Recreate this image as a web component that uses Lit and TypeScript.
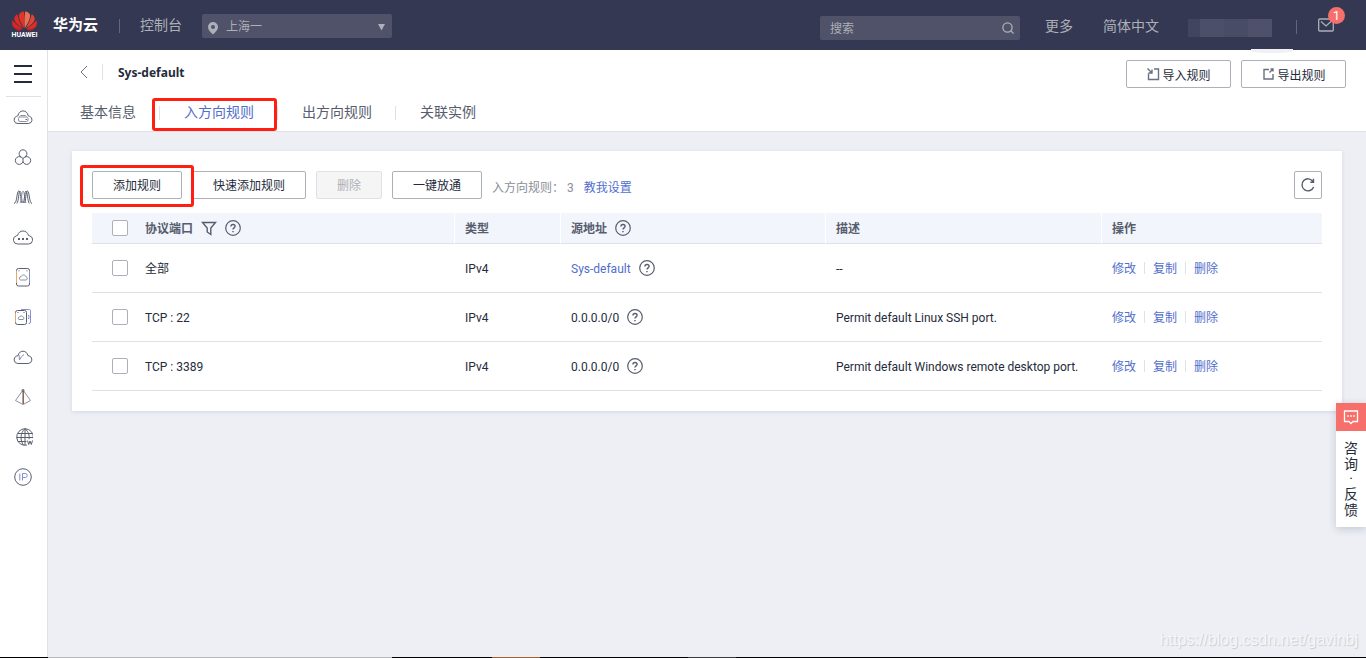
import { LitElement, html, css, svg, nothing } from "lit";
import { customElement, property } from "lit/decorators.js";
import { classMap } from "lit/directives/class-map.js";

interface Rule {
  protocol: string;
  type: string;
  source: string;
  group: boolean;
  note: string;
}

const rules: Rule[] = [
  { protocol: "全部", type: "IPv4", source: "Sys-default", group: true, note: "--" },
  { protocol: "TCP : 22", type: "IPv4", source: "0.0.0.0/0", group: false, note: "Permit default Linux SSH port." },
  { protocol: "TCP : 3389", type: "IPv4", source: "0.0.0.0/0", group: false, note: "Permit default Windows remote desktop port." },
];

const tabs = ["基本信息", "入方向规则", "出方向规则", "关联实例"];

const services = [
  {
    name: "云服务器",
    art: svg`<path d="M5 16.500h10.500a3.700 3.700 0 0 0 1-7.200l-1.300-.4C14.800 6 12.800 3.900 10 3.900S5.300 6 4.900 8.900l-1.300.4A3.700 3.700 0 0 0 5 16.500z"/><rect x="5.500" y="10" width="9.500" height="4.500" rx="1.500" class="soft"/><path class="soft" d="M6.500 9.500l1-1h5l1 1"/><path d="M12.500 12.500h1.500"/>`,
  },
  {
    name: "弹性伸缩",
    art: svg`<path d="M8.300 10.200a3.900 3.900 0 1 1 3.400 0M10 14.500a3.900 3.900 0 1 1-1.700-4.300L10 11.500l1.700-1.300A3.900 3.900 0 1 1 10 14.500v-3"/>`,
  },
  {
    name: "负载均衡",
    art: svg`<path d="M1 16.500C4.500 16 3.500 4 5.800 4S7.500 15 9 16M3.800 16.500C6 14 5.500 4 7 4"/><path class="soft" d="M7 4c1.500 0 1.500 10 3 12M7 16c1.800-2 1.500-12 3-12s1.500 10 3 12"/><path d="M10 16c1.800-2 1.500-12 3-12s1.500 10 3.200 12.500M11.500 16c1.500-2 1-12 3-12s1.500 12 4.500 12.500"/>`,
  },
  {
    name: "云容器",
    art: svg`<path d="M4.500 17h11a4.200 4.200 0 0 0 1.200-8.200l-1.200-.3C14.700 5.500 12.500 4 10 4S5.300 5.500 4.500 8.500l-1.200.3A4.200 4.200 0 0 0 4.500 17z"/><path class="dots" d="M5 12h2M9 12h2M13 12h2"/>`,
  },
  {
    name: "云硬盘",
    art: svg`<rect x="3.500" y="1.500" width="13" height="17.500" rx="2"/><path class="hot" d="M3.500 4v12"/><path class="cool" d="M16.500 4v12"/><path class="soft" d="M7.500 13h5.500a1.700 1.700 0 0 0 0-3.300c-.6-2.200-4.400-2.200-5 0a1.700 1.700 0 0 0-.5 3.300z"/><path d="M5.500 3.800h1M13.500 3.800h1"/>`,
  },
  {
    name: "云备份",
    art: svg`<rect x="2.500" y="3.500" width="11" height="14" rx="2"/><path class="hot" d="M2.500 6v9"/><path class="cool" d="M8 2.500h8.500a1 1 0 0 1 1 1v11.500a1.500 1.500 0 0 1-1.500 1.500h-.5M15 8.500h1v3h-1"/><path class="soft" d="M6 12.500h4a1.300 1.300 0 0 0 0-2.500c-.5-1.500-3-1.500-3.500 0a1.300 1.300 0 0 0-.5 2.500z"/><path d="M4.500 5.500h1M10.500 5.500h1"/>`,
  },
  {
    name: "对象存储",
    art: svg`<path d="M4.800 16.500h10.400a3.900 3.900 0 0 0 1-7.600l-1.200-.2C14.200 5.800 12.500 4.200 10 4.200S5.600 5.800 5 8.700l-1.200.2a3.900 3.900 0 0 0 1 7.600z"/><path class="cool" d="M6 8l.5 5 2-3.500 2.500-2"/>`,
  },
  {
    name: "虚拟私有云",
    art: svg`<path class="soft" d="M10 3L2.500 13.500 10 17.500l7.500-4z"/><path class="hot" d="M9.500 4v13"/><path d="M10.400 4v13"/><circle cx="10" cy="3.500" r="1"/>`,
  },
  {
    name: "广域网络",
    art: svg`<g transform="translate(2 0)"><path d="M12 18.100A8.300 8.300 0 1 1 18.200 11.500"/><path d="M8.500 18C5 13.500 5 6 10 1.700v16.300M10 1.700c4 3.500 4.500 7 4 10.500M3 6.500h14M1.700 10.500h16.500M3 14.500h8.500M12.500 13.500l1.200 4 1.300-3.500 1.300 3.500 1.200-4"/></g>`,
  },
  {
    name: "弹性公网",
    art: svg`<circle cx="10" cy="10" r="8.300"/><path class="cool" d="M6.800 6.500v7M9.500 13.500v-7h2.700a2 2 0 0 1 0 4H9.500"/>`,
  },
];

const helpIcon = html`<svg class="help" viewBox="0 0 16 16" aria-hidden="true">
  <circle cx="8" cy="8" r="7.300" />
  <path class="mark" d="M5.900 6.500A2.100 2.100 0 0 1 8 4.500c1.200 0 2.100.8 2.100 1.800 0 1.500-2.100 1.600-2.100 3.200M8 11v1.300" />
</svg>`;

const base = css`
  * { box-sizing: border-box; }
  a { color: inherit; text-decoration: none; }
  button, input, select { font: inherit; margin: 0; }
  svg { display: block; flex: none; fill: none; }
`;

@customElement("console-header")
class ConsoleHeader extends LitElement {
  static styles = [base, css`
    :host { display: flex; align-items: center; height: 50px; padding: 0 32px 0 12px; background: #343853; color: #adb0b8; font-size: 14px; line-height: 20px; position: relative; }
    .logo { width: 25px; }
    .flower { width: 25px; height: 20px; }
    .word { display: flex; justify-content: center; font: 700 7px/8px Roboto, sans-serif; color: #fff; }
    .brand { margin-left: 16px; font-size: 15px; font-weight: 700; color: #fff; }
    .rule { width: 1px; height: 14px; background: #62667b; margin: 2px 20px 0 21px; }
    .region { position: relative; margin: 2px 0 0 20px; width: 190px; height: 24px; }
    .region select { appearance: none; width: 100%; height: 24px; border: 0; border-radius: 2px; background: #4f5269; color: #adb0b8; font-size: 12px; padding: 2px 24px 0; }
    .pin { position: absolute; left: 5px; top: 7px; width: 12px; height: 14px; fill: #adb0b8; pointer-events: none; }
    .arrow { position: absolute; right: 6px; top: 9px; width: 9px; height: 8px; fill: #adb0b8; pointer-events: none; }
    .search { display: flex; align-items: center; margin: 6px 25px 0 auto; width: 200px; height: 24px; border-radius: 2px; background: #4f5269; padding: 0 5px 0 10px; }
    .search input { flex: 1; min-width: 0; border: 0; padding: 2px 0 0; background: none; color: #adb0b8; font-size: 12px; }
    .search input::placeholder { color: #adb0b8; opacity: 1; }
    .search svg { width: 14px; height: 14px; stroke: #adb0b8; stroke-width: 1.300; }
    .more, .lang { padding-top: 2px; }
    .lang { margin: 0 29px 0 30px; }
    .user { width: 84px; height: 18px; margin-top: 5px; background: linear-gradient(90deg, #41455f 0 12px, #4b4f67 12px 36px, #494c65 36px 60px, #4e5169 60px); }
    .last { margin: 3px 21px 0 24px; }
    .mail { position: relative; width: 16px; }
    .mail svg { width: 16px; height: 14px; stroke: #adb0b8; stroke-width: 1.300; }
    .badge { position: absolute; left: 10px; top: -11px; width: 17px; height: 17px; border-radius: 50%; background: #f66f6a; color: #fff; text-align: center; font-size: 13px; line-height: 17px; }
    .smudge { position: absolute; right: 73px; bottom: -3px; width: 42px; height: 4px; border-radius: 0 0 50% 50%; background: #f1f1f5; z-index: 1; }
  `];

  render() {
    return html`
      <a class="logo" href="#" aria-label="HUAWEI">
        <svg class="flower" viewBox="0 0 26 20">
          <path fill="#e2352a" d="M12.700 17.500C9.300 12 6.600 7 7.300 3.500 7.800 1.600 10 .3 12.300.1c.7 5.500.8 11.500.4 17.400z" />
          <path fill="#ee6f52" d="M13.300 17.500C16.700 12 19.400 7 18.700 3.500 18.200 1.600 16 .3 13.700.1c-.7 5.500-.8 11.500-.4 17.400z" />
          <path fill="#e02a24" d="M11.900 17.800C6.500 14.700 2.600 11.500 2.400 8c-.1-2.200 1.200-4 3.200-5 .9 5.500 3.500 10.500 6.300 14.800z" />
          <path fill="#e4432f" d="M14.100 17.800C19.500 14.700 23.400 11.500 23.600 8c.1-2.200-1.200-4-3.200-5-.9 5.500-3.500 10.500-6.300 14.800z" />
          <path fill="#dc2420" d="M11.200 18.400C6 18.700 2.500 18.200 1 15.700-.2 13.700-.1 11.200.6 9.300c2.800 3.700 6.600 6.600 10.600 9.100z" />
          <path fill="#df2c26" d="M14.800 18.400c5.200.3 8.700-.2 10.200-2.700 1.200-2 1.100-4.500.4-6.400-2.800 3.700-6.600 6.600-10.600 9.100z" />
          <path fill="#d2201e" d="M11 18.800c-3 1.800-6 1.700-8.100-.1zM15 18.800c3 1.800 6 1.700 8.100-.1z" />
        </svg>
        <span class="word">HUAWEI</span>
      </a>
      <span class="brand">华为云</span>
      <span class="rule"></span>
      <a href="#">控制台</a>
      <div class="region">
        <select aria-label="区域"><option>上海一</option></select>
        <svg class="pin" viewBox="0 0 12 14"><path fill-rule="evenodd" d="M6 1a5 5 0 0 0-5 5c0 3.500 5 7.500 5 7.500S11 9.500 11 6a5 5 0 0 0-5-5zm0 3a2 2 0 1 1 0 4 2 2 0 0 1 0-4z" /></svg>
        <svg class="arrow" viewBox="0 0 9 8"><path d="M1 1h7L4.500 7.500z" /></svg>
      </div>
      <label class="search">
        <input type="text" placeholder="搜索" aria-label="搜索" />
        <svg viewBox="0 0 14 14"><circle cx="6.500" cy="6.500" r="4.600" /><path d="M9.500 9.500l3 3" /></svg>
      </label>
      <a class="more" href="#">更多</a>
      <a class="lang" href="#">简体中文</a>
      <span class="user"></span>
      <span class="rule last"></span>
      <a class="mail" href="#" aria-label="消息">
        <svg viewBox="0 0 16 14"><rect x=".7" y="1" width="14.600" height="12" rx="1" /><path d="M3 3.500l5 4.500 5-4.500" /></svg>
        <span class="badge">1</span>
      </a>
      <span class="smudge"></span>
    `;
  }
}

@customElement("side-nav")
class SideNav extends LitElement {
  static styles = [base, css`
    :host { display: block; flex: none; width: 48px; background: #fff; border-right: 1px solid #dfe1e6; }
    .toggle { display: flex; align-items: center; justify-content: center; width: 100%; height: 46px; padding: 2px 1px 0 0; border: 0; background: none; }
    .toggle svg { width: 18px; height: 18px; stroke: #252b3a; stroke-width: 2; }
    nav { margin: 0 6px; border-top: 1px solid #dfe1e6; }
    .item { display: flex; align-items: center; justify-content: center; height: 40px; padding-right: 1px; }
    .item svg { width: 20px; height: 20px; stroke: #5a5f70; stroke-width: 1; }
    .soft { stroke: #8b90a0; }
    .dots { stroke-width: 2; }
    .hot { stroke: #e8a56c; }
    .cool { stroke: #848fcd; }
  `];

  render() {
    return html`
      <button class="toggle" aria-label="菜单"><svg viewBox="0 0 18 18"><path d="M0 1h18M0 9h18M0 17h18" /></svg></button>
      <nav>
        ${services.map((s) => html`<a class="item" href="#" aria-label=${s.name}><svg viewBox="0 0 20 20">${s.art}</svg></a>`)}
      </nav>
    `;
  }
}

@customElement("group-heading")
class GroupHeading extends LitElement {
  static styles = [base, css`
    :host { display: flex; justify-content: space-between; align-items: flex-start; padding: 10px 20px 0 32px; background: #fff; border-bottom: 1px solid #dfe1e6; }
    .title { display: flex; align-items: center; height: 24px; }
    .back { width: 8px; height: 14px; stroke: #6a7080; }
    .bar { width: 1px; height: 16px; margin: 0 15px 0 14px; background: #dfe1e6; }
    h1 { margin: 0; padding-top: 2px; font: 700 12px/22px "Noto Sans", "Noto Sans CJK SC", sans-serif; color: #252b3a; }
    .tabs { display: flex; align-items: center; height: 47px; padding-top: 9px; }
    .tab { position: relative; padding: 0 23px 0 24px; font-size: 14px; line-height: 20px; color: #575d6c; }
    .tab:first-child { padding-left: 0; }
    .tab + .tab { padding-left: 25px; }
    .tab + .tab::before { content: ""; position: absolute; left: 0; top: 4px; width: 1px; height: 14px; background: #dfe1e6; }
    .tab.active { color: #526ecc; }
    .frame { position: absolute; left: -7px; right: 0; top: -4px; height: 33px; border: 3px solid #ff1f12; border-radius: 3px; }
    .actions { display: flex; gap: 10px; }
    .actions button { display: flex; align-items: center; justify-content: center; gap: 2px; width: 105px; height: 28px; padding: 0; border: 1px solid #adb0b8; border-radius: 2px; background: #fff; color: #252b3a; font-size: 12px; }
    .actions svg { width: 14px; height: 14px; stroke: #6a7080; stroke-width: 1.400; }
  `];

  render() {
    return html`
      <div>
        <div class="title">
          <a href="#" aria-label="返回"><svg class="back" viewBox="0 0 8 14"><path d="M7 1L1 7l6 6" /></svg></a>
          <span class="bar"></span>
          <h1>Sys-default</h1>
        </div>
        <nav class="tabs">
          ${tabs.map((t, i) => html`<a href="#" class=${classMap({ tab: true, active: i === 1 })}>${t}${i === 1 ? html`<span class="frame"></span>` : nothing}</a>`)}
        </nav>
      </div>
      <div class="actions">
        <button><svg viewBox="0 0 14 14"><path d="M2.500 6.500v6h10V2H8M1.500 1.500l4.500 4.500M6 2.500v3.500H2.500" /></svg>导入规则</button>
        <button><svg viewBox="0 0 14 14"><path d="M8 2.500H3v9.500h9V7M8.500 5.500L11.500 2.500M9.500 2H12v2.500" /></svg>导出规则</button>
      </div>
    `;
  }
}

@customElement("rule-table")
class RuleTable extends LitElement {
  @property({ attribute: false }) rows: Rule[] = [];

  static styles = [base, css`
    :host { display: block; }
    table { width: 100%; table-layout: fixed; border-collapse: separate; border-spacing: 0; font-size: 12px; line-height: 18px; color: #252b3a; }
    .c-check { width: 43px; }
    .c-port { width: 320px; }
    .c-type { width: 106px; }
    .c-source { width: 265px; }
    .c-action { width: 220px; }
    th, td { padding: 2px 10px 0; text-align: left; border-bottom: 1px solid #dfe1e6; }
    th { height: 31px; background: #f2f5fc; color: #575d6c; font-weight: 700; }
    .split { border-right: 1px solid #fff; }
    td { height: 49px; }
    th:first-child, td:first-child { padding: 0 0 0 20px; }
    .cell { display: flex; align-items: center; gap: 8px; }
    input { appearance: none; display: block; width: 16px; height: 16px; border: 1px solid #adb0b8; border-radius: 2px; background: #fff; }
    .cell svg { width: 16px; height: 16px; margin-bottom: 2px; stroke: #575d6c; stroke-width: 1.200; }
    .mark { stroke-width: 1.400; }
    .link { color: #526ecc; }
    .ops { display: flex; align-items: center; }
    .ops a + a { margin-left: 8px; padding-left: 9px; position: relative; }
    .ops a + a::before { content: ""; position: absolute; left: 0; top: 2px; width: 1px; height: 12px; background: #dfe1e6; }
  `];

  render() {
    return html`
      <table>
        <colgroup><col class="c-check" /><col class="c-port" /><col class="c-type" /><col class="c-source" /><col /><col class="c-action" /></colgroup>
        <thead>
          <tr>
            <th><input type="checkbox" aria-label="全选" /></th>
            <th class="split"><div class="cell">协议端口
              <svg viewBox="0 0 16 16"><path class="mark" d="M1.500 2.500h13L9.800 8v6.500L6.200 12V8z" /></svg>${helpIcon}</div></th>
            <th class="split">类型</th>
            <th class="split"><div class="cell">源地址${helpIcon}</div></th>
            <th class="split">描述</th>
            <th>操作</th>
          </tr>
        </thead>
        <tbody>
          ${this.rows.map((r) => html`<tr>
            <td><input type="checkbox" aria-label=${r.protocol} /></td>
            <td>${r.protocol}</td>
            <td>${r.type}</td>
            <td><div class="cell">${r.group ? html`<a class="link" href="#">${r.source}</a>` : html`<span>${r.source}</span>`}${helpIcon}</div></td>
            <td>${r.note}</td>
            <td><div class="ops link"><a href="#">修改</a><a href="#">复制</a><a href="#">删除</a></div></td>
          </tr>`)}
        </tbody>
      </table>
    `;
  }
}

@customElement("rule-card")
class RuleCard extends LitElement {
  static styles = [base, css`
    :host { display: block; margin: 19px 24px 0; padding: 20px; background: #fff; box-shadow: 0 1px 4px rgba(37, 43, 58, 0.12); }
    .toolbar { display: flex; align-items: center; gap: 10px; margin-bottom: 14px; font-size: 12px; line-height: 18px; }
    button { position: relative; height: 28px; padding: 2px 20px 0; border: 1px solid #adb0b8; border-radius: 2px; background: #fff; color: #252b3a; white-space: nowrap; }
    button:disabled { background: #f5f5f6; border-color: #dfe1e6; color: #adb0b8; }
    .add { z-index: 1; }
    .frame { position: absolute; inset: -7px -13px -9px; border: 3px solid #ff1f12; border-radius: 3px; }
    .summary { display: flex; margin: 6px auto 0 0; color: #8a8e99; }
    .summary b { margin: 0 10px 0 3px; font-weight: 400; }
    .summary a { color: #526ecc; }
    .refresh { display: grid; place-items: center; width: 28px; padding: 0; }
    .refresh svg { width: 16px; height: 16px; stroke: #575d6c; stroke-width: 1.400; }
  `];

  render() {
    return html`
      <div class="toolbar">
        <button class="add">添加规则<span class="frame"></span></button>
        <button>快速添加规则</button>
        <button disabled>删除</button>
        <button>一键放通</button>
        <div class="summary"><span>入方向规则：</span><b>3</b><a href="#">教我设置</a></div>
        <button class="refresh" aria-label="刷新"><svg viewBox="0 0 16 16"><path d="M13.600 10A6 6 0 1 1 13 4.500M13.500 1.800v3.400h-3.200" /></svg></button>
      </div>
      <rule-table .rows=${rules}></rule-table>
    `;
  }
}

@customElement("app-root")
class AppRoot extends LitElement {
  static styles = [base, css`
    :host { display: flex; flex-direction: column; min-height: 100vh; position: relative; background: #edeff5; font-family: Roboto, "Noto Sans CJK SC", sans-serif; font-size: 12px; color: #252b3a; }
    .body { flex: 1; display: flex; }
    main { flex: 1; min-width: 0; }
    .feedback { position: absolute; right: 0; top: 403px; width: 30px; background: #fff; box-shadow: 0 2px 8px rgba(37, 43, 58, 0.2); font-size: 14px; line-height: 16px; text-align: center; }
    .bubble { display: grid; place-items: center; height: 28px; background: #f66f6a; }
    .bubble svg { width: 16px; height: 16px; stroke: #fff; stroke-width: 1.300; }
    .label { display: grid; padding: 9px 0; }
    .point { line-height: 14px; }
    .watermark { position: absolute; right: 8px; bottom: 8px; font: 16px/20px "Liberation Sans", sans-serif; color: #f5f6fa; text-shadow: 1px 1px 1px #c9cbd0; }
    .strip { height: 1px; background: linear-gradient(90deg, #000 0 48px, #b9babd 48px 392px, #000 392px 492px, #a06030 492px 540px, #000 540px 688px, #3b3b3b 688px 736px, #000 736px); }
  `];

  render() {
    return html`
      <console-header></console-header>
      <div class="body">
        <side-nav></side-nav>
        <main>
          <group-heading></group-heading>
          <rule-card></rule-card>
        </main>
      </div>
      <div class="strip"></div>
      <a class="feedback" href="#">
        <span class="bubble"><svg viewBox="0 0 16 16"><path d="M1.500 2h13v10.500H10l-2 2-2-2H1.500z" /><path d="M4.200 7h1.600M7.200 7h1.600M10.200 7h1.600" /></svg></span>
        <span class="label"><span>咨</span><span>询</span><span class="point">·</span><span>反</span><span>馈</span></span>
      </a>
      <span class="watermark">https://blog.csdn.net/gavinbj</span>
    `;
  }
}
